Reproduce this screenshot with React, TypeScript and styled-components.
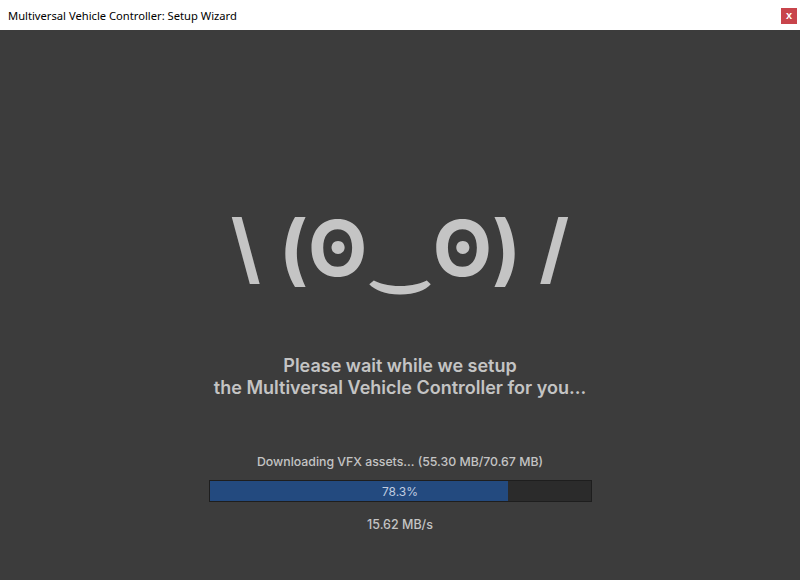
import React from 'react';
import styled, { createGlobalStyle } from 'styled-components';

const GlobalStyle = createGlobalStyle`
    html, body {
        margin: 0;
        padding: 0;
        height: 100%;
        background: #3c3c3c;
    }
    #root {
        height: 100%;
    }
`;

const App = () => {
    const downloaded = 55.3;
    const total = 70.67;
    const percent = (downloaded / total) * 100;

    return (
        <>
            <GlobalStyle />
            <Window>
                <TitleBar>
                    <Title>Multiversal Vehicle Controller: Setup Wizard</Title>
                    <CloseButton>x</CloseButton>
                </TitleBar>
                <Body>
                    <Face>\ (ʘ‿ʘ) /</Face>
                    <Message>
                        Please wait while we setup
                        <br />
                        the Multiversal Vehicle Controller for you...
                    </Message>
                    <Progress>
                        <Status>
                            Downloading VFX assets... ({downloaded.toFixed(2)} MB/
                            {total.toFixed(2)} MB)
                        </Status>
                        <Bar>
                            <Fill style={{ width: `${percent}%` }} />
                            <BarLabel>{percent.toFixed(1)}%</BarLabel>
                        </Bar>
                        <Speed>15.62 MB/s</Speed>
                    </Progress>
                </Body>
            </Window>
        </>
    );
};

const Window = styled.div`
    display: flex;
    flex-direction: column;
    width: 800px;
    height: 580px;
    background: #3c3c3c;
    font-family: Inter, 'Noto Sans', sans-serif;
`;

const TitleBar = styled.div`
    display: flex;
    align-items: center;
    justify-content: space-between;
    height: 30px;
    padding: 0 3px 0 8px;
    background: #ffffff;
    flex-shrink: 0;
`;

const Title = styled.span`
    font-family: 'Noto Sans', 'Liberation Sans', sans-serif;
    font-size: 11.2px;
    color: #000000;
`;

const CloseButton = styled.div`
    display: flex;
    align-items: center;
    justify-content: center;
    width: 16px;
    height: 16px;
    margin-top: 1px;
    background: #c8444b;
    color: #ffffff;
    font-family: 'Liberation Sans', sans-serif;
    font-size: 11px;
    font-weight: bold;
    line-height: 1;
`;

const Body = styled.div`
    display: flex;
    flex-direction: column;
    align-items: center;
    flex: 1;
    padding-top: 172px;
`;

const Face = styled.div`
    font-size: 77px;
    font-weight: 700;
    line-height: 93px;
    color: #c4c4c4;
    white-space: pre;
`;

const Message = styled.div`
    margin-top: 60px;
    font-size: 18px;
    font-weight: 600;
    line-height: 22px;
    color: #c4c4c4;
    text-align: center;
`;

const Progress = styled.div`
    display: flex;
    flex-direction: column;
    align-items: center;
    margin-top: 55px;
`;

const Status = styled.div`
    font-size: 12.3px;
    font-weight: 500;
    line-height: 16px;
    color: #c4c4c4;
`;

const Bar = styled.div`
    position: relative;
    width: 381px;
    height: 20px;
    margin-top: 10px;
    background: #2b2b2b;
    border: 1px solid #1e1e1e;
`;

const Fill = styled.div`
    height: 100%;
    background: #234a7f;
`;

const BarLabel = styled.div`
    position: absolute;
    inset: 0;
    display: flex;
    align-items: center;
    justify-content: center;
    font-size: 12px;
    color: #c0cde0;
`;

const Speed = styled.div`
    margin-top: 15px;
    font-size: 12.5px;
    font-weight: 500;
    color: #c4c4c4;
`;

export default App;
